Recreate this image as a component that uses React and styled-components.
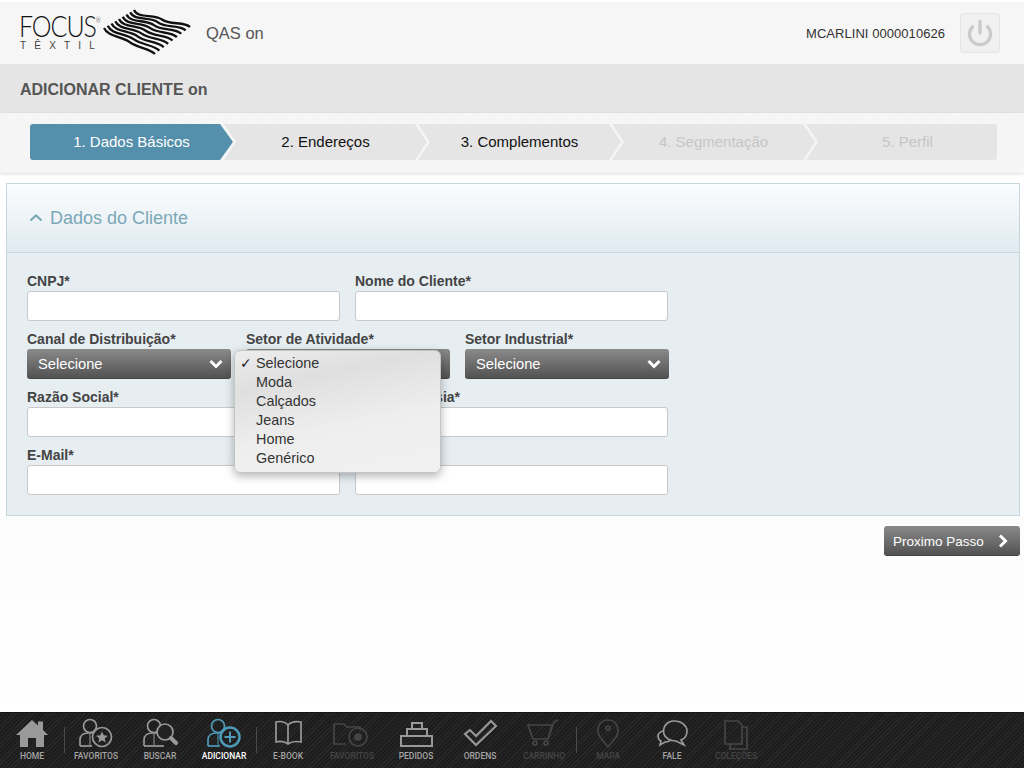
import React from 'react'
import styled, { createGlobalStyle } from 'styled-components'
import { Power } from 'lucide-react'

const Global = createGlobalStyle`
    html, body { margin: 0; padding: 0; background: #fff; }
    body { font-family: "Liberation Sans", Arial, sans-serif; }
    * { box-sizing: border-box; }
`

const Page = styled.div`
    width: 1024px;
    height: 768px;
    display: flex;
    flex-direction: column;
    overflow: hidden;
`

const Header = styled.header`
    height: 64px;
    flex: none;
    display: flex;
    align-items: center;
    padding: 0 24px 0 20px;
    background: #f6f6f6;
    border-top: 2px solid #fff;
`

const Logo = styled.div`
    width: 170px;
    height: 46px;
    display: flex;
    align-items: center;
    gap: 3px;
`

const LogoWords = styled.div`
    width: 80px;
    flex: none;
    display: flex;
    flex-direction: column;
    gap: 3px;
`

const LogoName = styled.span`
    font-family: "Lato", sans-serif;
    font-weight: 300;
    font-size: 29px;
    line-height: 22px;
    letter-spacing: -1.2px;
    margin-left: -1px;
    color: #111;
    white-space: nowrap;
    transform: scaleX(0.86);
    transform-origin: left center;
    sup {
        font-size: 7px;
        line-height: 0;
        vertical-align: 14px;
        letter-spacing: 0;
    }
`

const LogoSub = styled.span`
    font-size: 10px;
    line-height: 11px;
    letter-spacing: 8.2px;
    color: #444;
    white-space: nowrap;
`

const Env = styled.div`
    margin-left: 16px;
    font-size: 16.5px;
    color: #555;
`

const User = styled.div`
    margin-left: auto;
    font-size: 13px;
    letter-spacing: 0.05px;
    color: #333;
`

const PowerButton = styled.div`
    width: 40px;
    height: 40px;
    margin-left: 15px;
    display: flex;
    align-items: center;
    justify-content: center;
    background: #f0f0f0;
    border: 1px solid #e6e6e6;
    border-radius: 3px;
    color: #cacaca;
`

const TitleBar = styled.div`
    height: 49px;
    flex: none;
    display: flex;
    align-items: center;
    padding: 2px 0 0 20px;
    background: #e5e5e5;
    font-size: 16px;
    font-weight: bold;
    color: #555;
`

const StepsBand = styled.div`
    height: 60px;
    flex: none;
    padding: 11px 27px 13px 30px;
    background: repeating-linear-gradient(135deg, #f8f8f8 0 1px, #f4f4f4 1px 3px);
    box-shadow: 0 1px 3px rgba(0, 0, 0, 0.14);
`

const Steps = styled.div`
    height: 36px;
    display: flex;
    overflow: hidden;
    border-radius: 3px;
`

const Step = styled.div`
    flex: none;
    width: 203px;
    height: 36px;
    margin-right: -9px;
    padding-bottom: 1px;
    display: flex;
    align-items: center;
    justify-content: center;
    font-size: 15px;
    background: ${p => (p.$active ? '#5490ab' : '#e5e5e5')};
    color: ${p => (p.$active ? '#fff' : p.$disabled ? '#c6c6c6' : '#111')};
    clip-path: ${p =>
        p.$first
            ? 'polygon(0 0, 190px 0, 203px 50%, 190px 100%, 0 100%)'
            : 'polygon(0 0, 191px 0, 203px 50%, 191px 100%, 0 100%, 12px 50%)'};
`

const Panel = styled.section`
    height: 333px;
    flex: none;
    margin: 10px 4px 0 6px;
    display: flex;
    flex-direction: column;
    background: #e6eef2;
    border: 1px solid #c6d6dd;
`

const PanelHead = styled.div`
    height: 69px;
    flex: none;
    display: flex;
    align-items: center;
    gap: 7px;
    padding-left: 22px;
    background: linear-gradient(#fbfdfe, #e0eaf0);
    border-bottom: 1px solid #c6d6dd;
    font-size: 18px;
    color: #7ba8b7;
`

const Form = styled.div`
    padding: 18px 0 20px 20px;
    display: flex;
    flex-direction: column;
    gap: 8px;
`

const Row = styled.div`
    display: flex;
    gap: 15px;
`

const Field = styled.div`
    position: relative;
    width: ${p => p.$w}px;
`

const Label = styled.div`
    height: 20px;
    font-size: 14px;
    line-height: 20px;
    font-weight: bold;
    color: #444;
    white-space: nowrap;
`

const Input = styled.div`
    height: 30px;
    background: #fff;
    border: 1px solid #c9c9c9;
    border-radius: 3px;
`

const Select = styled.div`
    height: 30px;
    display: flex;
    align-items: center;
    justify-content: space-between;
    padding: 0 8px 0 11px;
    border-radius: 3px;
    background: linear-gradient(#8a8a8a, #525252);
    border-bottom: 1px solid #444;
    color: #fff;
    font-size: 14.7px;
`

const Popup = styled.div`
    position: absolute;
    z-index: 5;
    top: 21px;
    left: -12px;
    width: 207px;
    height: 123px;
    padding: 2px 0;
    background: linear-gradient(168deg, #ededed 0%, #dfdfdf 25%, #eeeeee 60%, #f1f1f1 100%);
    border: 1px solid #c4c4c4;
    border-radius: 6px;
    box-shadow: 0 3px 10px rgba(0, 0, 0, 0.3);
`

const Option = styled.div`
    height: 19px;
    display: flex;
    align-items: center;
    padding-left: 21px;
    font-size: 14.4px;
    color: #333;
    &[data-check]::before {
        content: '✓';
        flex: none;
        width: 16px;
        margin-left: -16px;
        font-family: "DejaVu Sans", sans-serif;
        font-weight: bold;
        font-size: 14px;
        color: #222;
    }
`

const Lower = styled.div`
    flex: 1;
    background: linear-gradient(#fcfcfc, #fff);
`

const Actions = styled.div`
    display: flex;
    justify-content: flex-end;
    padding: 10px 4px 0 0;
`

const NextButton = styled.div`
    width: 136px;
    height: 30px;
    display: flex;
    align-items: center;
    justify-content: space-between;
    padding: 1px 10px 0 9px;
    border-radius: 3px;
    background: linear-gradient(#8a8a8a, #525252);
    border-bottom: 1px solid #444;
    color: #fff;
    font-size: 13.5px;
`

const Footer = styled.nav`
    height: 56px;
    flex: none;
    display: flex;
    background: repeating-linear-gradient(135deg, #292929 0 1px, #1d1d1d 1px 3px);
    border-top: 1px solid #151515;
`

const Cell = styled.div`
    width: 64px;
    flex: none;
    padding-top: 3px;
    display: flex;
    flex-direction: column;
    align-items: center;
    ${p => p.$sep && 'background: linear-gradient(#4a4a4a, #4a4a4a) left 14px / 1px 26px no-repeat;'}
    color: ${p => (p.$active ? '#4d9ab8' : p.$off ? '#454545' : '#999')};
`

const CellLabel = styled.span`
    margin-top: -1px;
    font-family: "Roboto", sans-serif;
    font-weight: 500;
    font-size: 8.5px;
    line-height: 10px;
    white-space: nowrap;
    color: ${p => (p.$active ? '#fff' : p.$off ? '#454545' : '#a4a4a4')};
`

const Chevron = ({ dir }) => (
    <svg width="14" height="14" viewBox="0 0 14 14" fill="none" stroke="currentColor" strokeWidth="3" style={{ flex: 'none' }}>
        {dir === 'down' && <polyline points="1.5,4 7,9.5 12.5,4" />}
        {dir === 'right' && <polyline points="4,1.5 9.5,7 4,12.5" />}
        {dir === 'up' && <polyline points="1.5,9.5 7,4.5 12.5,9.5" strokeWidth="2.2" />}
    </svg>
)

// band of strands: each one runs from the upper-left edge to the right edge,
// steep at both ends and slanted in the middle
const Waves = () => {
    const strands = []
    for (let i = 0; i < 9; i++) {
        const t = i / 8
        const sx = 1 + t * 30
        const sy = 19 - t * 18
        const ex = 52 + t * 35
        const ey = 45 - t * 27
        const mx = (sx + ex) / 2
        const my = (sy + ey) / 2 + 1
        strands.push(
            <path
                key={i}
                d={`M${sx} ${sy} C${sx + 4} ${sy + 9} ${mx - 8} ${my - 6} ${mx} ${my} S${ex - 6} ${ey - 6} ${ex} ${ey}`}
            />
        )
    }
    return (
        <svg width="88" height="46" viewBox="0 0 88 46" fill="none" stroke="#111" strokeWidth="2.3" style={{ flex: 'none', marginTop: '-2px' }}>
            {strands}
        </svg>
    )
}

const Person = () => (
    <g>
        <circle cx="26" cy="10" r="6.5" />
        <path d="M16 30 V24 C16 19 20 17 24 17 L29 17" />
        <path d="M26 18 V29" strokeWidth="1" />
    </g>
)

const icons = {
    home: <path fill="currentColor" stroke="none" d="M16 19 L32 4 L38 9.5 V5.5 H43 V14 L48 19 H44 V31 H36 V22 H28 V31 H20 V19 Z" />,
    fav: (
        <>
            <Person />
            <circle cx="38" cy="21" r="9.5" />
            <path fill="currentColor" stroke="none" d="M38 15.5 L39.7 19.3 L43.8 19.7 L40.7 22.4 L41.6 26.4 L38 24.3 L34.4 26.4 L35.3 22.4 L32.2 19.7 L36.3 19.3 Z" />
            <path d="M16 30 H28" />
        </>
    ),
    search: (
        <>
            <Person />
            <circle cx="37" cy="16" r="8" fill="#222" />
            <path d="M43 22 L48 27" strokeWidth="4" strokeLinecap="round" />
            <path d="M16 30 H36" />
        </>
    ),
    add: (
        <>
            <Person />
            <circle cx="38" cy="21" r="9.5" strokeWidth="2.5" />
            <path d="M38 15.5 V26.5 M32.5 21 H43.5" strokeWidth="2" />
            <path d="M16 30 H28" />
        </>
    ),
    book: (
        <>
            <path d="M32 9 C28 5 24 5 20 6 V26 C24 25 28 25 32 28 C36 25 40 25 45 26 V6 C40 5 36 5 32 9 Z" />
            <path d="M32 9 V28" />
        </>
    ),
    favOff: (
        <>
            <path d="M14 8 H24 L27 11 H40 V14 M14 8 V28 H26" />
            <circle cx="38" cy="21" r="9" />
            <circle cx="38" cy="21" r="3" fill="currentColor" />
        </>
    ),
    orders: (
        <g strokeWidth="2">
            <rect x="28" y="7" width="10" height="6" />
            <rect x="23" y="13" width="20" height="7" />
            <rect x="17" y="20" width="31" height="10" />
        </g>
    ),
    check: <path strokeWidth="2" d="M17 18 L22 14 L28 20 L43 5 L48 10 L28 29 Z" />,
    cart: (
        <>
            <path d="M16 9 H40 L36 23 H21 Z" />
            <path d="M36 23 L42 6 L46 4" />
            <circle cx="23" cy="27" r="2" />
            <circle cx="34" cy="27" r="2" />
        </>
    ),
    map: (
        <>
            <path d="M32 31 L24 21 C20 15 22 4 32 4 C42 4 44 15 40 21 Z" />
            <circle cx="32" cy="12" r="2" />
        </>
    ),
    talk: (
        <>
            <path d="M34 5 C42 5 47 10 47 15 C47 20 44 23 41 24 L44 29 L36 25 C30 25 25 22 24 18 C22 11 27 5 34 5 Z" />
            <path d="M24 15 C20 15 18 18 18 20 C18 22 19 24 21 25 L20 29 L25 26 C28 26 30 25 31 24" />
        </>
    ),
    pages: (
        <>
            <path d="M21 5 H34 L38 9 V28 H21 Z" />
            <path d="M38 11 H43 V33 H26 V28" />
        </>
    ),
}

const items = [
    { label: 'HOME', icon: 'home' },
    { label: 'FAVORITOS', icon: 'fav', sep: true },
    { label: 'BUSCAR', icon: 'search' },
    { label: 'ADICIONAR', icon: 'add', active: true },
    { label: 'E-BOOK', icon: 'book', sep: true },
    { label: 'FAVORITOS', icon: 'favOff', off: true },
    { label: 'PEDIDOS', icon: 'orders' },
    { label: 'ORDENS', icon: 'check' },
    { label: 'CARRINHO', icon: 'cart', off: true },
    { label: 'MAPA', icon: 'map', off: true, sep: true },
    { label: 'FALE', icon: 'talk' },
    { label: 'COLEÇÕES', icon: 'pages', off: true },
]

const options = ['Selecione', 'Moda', 'Calçados', 'Jeans', 'Home', 'Genérico']

const steps = [
    { text: '1. Dados Básicos', active: true },
    { text: '2. Endereços' },
    { text: '3. Complementos' },
    { text: '4. Segmentação', disabled: true },
    { text: '5. Perfil', disabled: true },
]

export default function App() {
    return (
        <Page>
            <Global />
            <Header>
                <Logo>
                    <LogoWords>
                        <LogoName>FOCUS<sup>®</sup></LogoName>
                        <LogoSub>TÊXTIL</LogoSub>
                    </LogoWords>
                    <Waves />
                </Logo>
                <Env>QAS on</Env>
                <User>MCARLINI 0000010626</User>
                <PowerButton>
                    <Power size={28} strokeWidth={2.8} />
                </PowerButton>
            </Header>
            <TitleBar>ADICIONAR CLIENTE on</TitleBar>
            <StepsBand>
                <Steps>
                    {steps.map((s, i) => (
                        <Step key={s.text} $first={i === 0} $active={s.active} $disabled={s.disabled}>
                            {s.text}
                        </Step>
                    ))}
                </Steps>
            </StepsBand>
            <Panel>
                <PanelHead>
                    <Chevron dir="up" />
                    Dados do Cliente
                </PanelHead>
                <Form>
                    <Row>
                        <Field $w={313}><Label>CNPJ*</Label><Input /></Field>
                        <Field $w={313}><Label>Nome do Cliente*</Label><Input /></Field>
                    </Row>
                    <Row>
                        <Field $w={204}>
                            <Label>Canal de Distribuição*</Label>
                            <Select>Selecione <Chevron dir="down" /></Select>
                        </Field>
                        <Field $w={204}>
                            <Label>Setor de Atividade*</Label>
                            <Select>Selecione <Chevron dir="down" /></Select>
                            <Popup>
                                {options.map((o, i) => (
                                    <Option key={o} data-check={i === 0 ? '' : undefined}>{o}</Option>
                                ))}
                            </Popup>
                        </Field>
                        <Field $w={204}>
                            <Label>Setor Industrial*</Label>
                            <Select>Selecione <Chevron dir="down" /></Select>
                        </Field>
                    </Row>
                    <Row>
                        <Field $w={313}><Label>Razão Social*</Label><Input /></Field>
                        <Field $w={313}><Label>Nome Fantasia*</Label><Input /></Field>
                    </Row>
                    <Row>
                        <Field $w={313}><Label>E-Mail*</Label><Input /></Field>
                        <Field $w={313}><Label>Telefone*</Label><Input /></Field>
                    </Row>
                </Form>
            </Panel>
            <Lower>
                <Actions>
                    <NextButton>Proximo Passo <Chevron dir="right" /></NextButton>
                </Actions>
            </Lower>
            <Footer>
                {items.map((it, i) => (
                    <Cell key={i} $sep={it.sep} $active={it.active} $off={it.off}>
                        <svg width="64" height="36" viewBox="0 0 64 36" fill="none" stroke="currentColor" strokeWidth="1.7">
                            {icons[it.icon]}
                        </svg>
                        <CellLabel $active={it.active} $off={it.off}>{it.label}</CellLabel>
                    </Cell>
                ))}
            </Footer>
        </Page>
    )
}
